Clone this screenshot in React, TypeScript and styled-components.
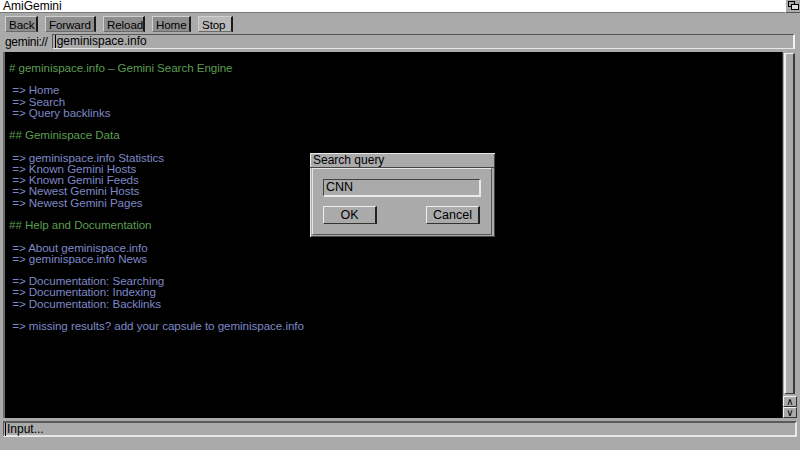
import React from "react";
import styled, { createGlobalStyle } from "styled-components";

const Global = createGlobalStyle`
  html, body { margin: 0; padding: 0; background: #aaaaaa; }
  body { font-family: "Liberation Sans", Arial, sans-serif; width: 800px; height: 450px; overflow: hidden; }
  * { box-sizing: border-box; }
`;

const Screen = styled.div`
  position: relative;
  width: 800px;
  height: 450px;
  background: #aaaaaa;
  display: flex;
  flex-direction: column;
`;

const TitleBar = styled.div`
  height: 13px;
  background: #ffffff;
  border-bottom: 1px solid #7a7a7a;
  display: flex;
  align-items: center;
  justify-content: space-between;
  font-size: 12px;
  color: #000;
  padding-left: 3px;
  line-height: 12px;
`;

const TitleText = styled.span`
  margin-top: -1px;
`;

const Depth = styled.div`
  width: 15px;
  height: 13px;
  background: #aaaaaa;
  border-left: 1px solid #ffffff;
  border-bottom: 1px solid #555;
  display: flex;
  align-items: center;
  justify-content: center;
`;

const Toolbar = styled.div`
  display: flex;
  gap: 7px;
  padding: 2px 5px 0 5px;
  height: 19px;
  align-items: center;
`;

const ToolButton = styled.div<{ $light?: boolean; $w: number }>`
  width: ${(p) => p.$w}px;
  height: 16px;
  padding: 0 0 0 3px;
  font-size: 11.6px;
  line-height: 15px;
  white-space: nowrap;
  letter-spacing: -0.1px;
  color: #000;
  background: ${(p) => (p.$light ? "#b9b9b9" : "#8e8e8e")};
  border-top: 1px solid #cfcfcf;
  border-left: 1px solid #cfcfcf;
  border-right: 2px solid #1a1a1a;
  border-bottom: 1px solid #6a6a6a;
`;

const AddressRow = styled.div`
  display: flex;
  align-items: center;
  height: 17px;
  padding: 0 5px;
  margin-top: 1px;
  gap: 4px;
`;

const Label = styled.span`
  font-size: 12px;
  letter-spacing: -0.3px;
  color: #000;
`;

const Field = styled.div`
  flex: 1;
  height: 15px;
  border-top: 1px solid #555;
  border-left: 1px solid #555;
  border-bottom: 1px solid #e6e6e6;
  border-right: 2px solid #f2f2f2;
  font-size: 12px;
  line-height: 13px;
  color: #000;
  padding-left: 2px;
  display: flex;
  align-items: center;
`;

const Cursor = styled.span`
  display: inline-block;
  width: 1px;
  height: 13px;
  background: #000;
  margin-right: 1px;
`;

const Main = styled.div`
  display: flex;
  margin-top: 2px;
  padding: 0 3px 0 3px;
  height: 366px;
`;

const Content = styled.div`
  flex: 1;
  background: #000;
  border-left: 2px solid #6a6a6a;
  padding: 10px 0 0 4px;
  font-size: 11.6px;
  line-height: 11.22px;
  letter-spacing: -0.05px;
`;

const Line = styled.div<{ $kind: "h" | "l" | "b" }>`
  height: 11.22px;
  white-space: pre;
  color: ${(p) => (p.$kind === "h" ? "#5c9e50" : "#7f88c8")};
`;

const Scroll = styled.div`
  width: 15px;
  display: flex;
  flex-direction: column;
  background: #aaaaaa;
  border-left: 1px solid #333;
`;

const Knob = styled.div`
  flex: 1;
  margin: 1px 2px 2px 1px;
  background: #aaaaaa;
  border-left: 2px solid #f0f0f0;
  border-top: 1px solid #f0f0f0;
  border-right: 2px solid #3a3a3a;
  border-bottom: 1px solid #3a3a3a;
`;

const Arrow = styled.div`
  height: 11px;
  font-size: 10px;
  line-height: 10px;
  text-align: center;
  color: #000;
  border-top: 1px solid #f0f0f0;
  border-left: 1px solid #f0f0f0;
  border-right: 1px solid #333;
  border-bottom: 1px solid #333;
  font-family: "DejaVu Sans", sans-serif;
`;

const Status = styled.div`
  margin: 3px 3px 0 3px;
  height: 16px;
  border-top: 2px solid #5a5a5a;
  border-left: 1px solid #5a5a5a;
  border-bottom: 2px solid #e8e8e8;
  border-right: 2px solid #e8e8e8;
  font-size: 12px;
  display: flex;
  align-items: center;
  padding-left: 1px;
  color: #000;
`;

const Dialog = styled.div`
  position: absolute;
  left: 309px;
  top: 152px;
  width: 187px;
  height: 86px;
  background: #aaaaaa;
  border: 1px solid #000;
  box-shadow: inset 1px 1px 0 #e6e6e6, inset -1px -1px 0 #444;
  display: flex;
  flex-direction: column;
`;

const DialogTitle = styled.div`
  height: 15px;
  font-size: 12px;
  line-height: 15px;
  padding-left: 3px;
  color: #000;
  border-bottom: 1px solid #444;
`;

const DialogBody = styled.div`
  flex: 1;
  margin: 0 3px 2px 2px;
  border-top: 1px solid #e6e6e6;
  border-left: 1px solid #e6e6e6;
  border-right: 1px solid #555;
  border-bottom: 1px solid #555;
  padding: 10px 10px 0 10px;
  display: flex;
  flex-direction: column;
  gap: 9px;
`;

const DialogField = styled.div`
  height: 18px;
  border-top: 1px solid #444;
  border-left: 1px solid #444;
  border-right: 2px solid #eaeaea;
  border-bottom: 2px solid #eaeaea;
  font-size: 12.5px;
  line-height: 15px;
  padding-left: 2px;
  color: #000;
`;

const DialogButtons = styled.div`
  display: flex;
  justify-content: space-between;
  padding-right: 1px;
`;

const DialogButton = styled.div`
  width: 54px;
  height: 18px;
  font-size: 12.5px;
  line-height: 16px;
  text-align: center;
  color: #000;
  border-top: 1px solid #eeeeee;
  border-left: 1px solid #eeeeee;
  border-right: 2px solid #222;
  border-bottom: 1px solid #333;
`;

type L = { k: "h" | "l" | "b"; t: string };

const lines: L[] = [
  { k: "h", t: "# geminispace.info \u2013 Gemini Search Engine" },
  { k: "b", t: "" },
  { k: "l", t: " => Home" },
  { k: "l", t: " => Search" },
  { k: "l", t: " => Query backlinks" },
  { k: "b", t: "" },
  { k: "h", t: "## Geminispace Data" },
  { k: "b", t: "" },
  { k: "l", t: " => geminispace.info Statistics" },
  { k: "l", t: " => Known Gemini Hosts" },
  { k: "l", t: " => Known Gemini Feeds" },
  { k: "l", t: " => Newest Gemini Hosts" },
  { k: "l", t: " => Newest Gemini Pages" },
  { k: "b", t: "" },
  { k: "h", t: "## Help and Documentation" },
  { k: "b", t: "" },
  { k: "l", t: " => About geminispace.info" },
  { k: "l", t: " => geminispace.info News" },
  { k: "b", t: "" },
  { k: "l", t: " => Documentation: Searching" },
  { k: "l", t: " => Documentation: Indexing" },
  { k: "l", t: " => Documentation: Backlinks" },
  { k: "b", t: "" },
  { k: "l", t: " => missing results? add your capsule to geminispace.info" },
];

const buttons = [
  { label: "Back", w: 33 },
  { label: "Forward", w: 51 },
  { label: "Reload", w: 42 },
  { label: "Home", w: 39 },
  { label: "Stop", w: 35, light: true },
];

export default function App() {
  return (
    <>
      <Global />
      <Screen>
        <TitleBar>
          <TitleText>AmiGemini</TitleText>
          <Depth>
            <svg width="11" height="9" viewBox="0 0 11 9">
              <rect x="0.5" y="0.5" width="6" height="5" fill="#aaaaaa" stroke="#000" />
              <rect x="3.5" y="3.5" width="7" height="5" fill="#dddddd" stroke="#000" />
            </svg>
          </Depth>
        </TitleBar>
        <Toolbar>
          {buttons.map((b) => (
            <ToolButton key={b.label} $w={b.w} $light={b.light}>
              {b.label}
            </ToolButton>
          ))}
        </Toolbar>
        <AddressRow>
          <Label>gemini://</Label>
          <Field>
            <Cursor />
            geminispace.info
          </Field>
        </AddressRow>
        <Main>
          <Content>
            {lines.map((l, i) => (
              <Line key={i} $kind={l.k}>
                {l.t}
              </Line>
            ))}
          </Content>
          <Scroll>
            <Knob />
            <Arrow>∧</Arrow>
            <Arrow>∨</Arrow>
          </Scroll>
        </Main>
        <Status>
          <Cursor />
          Input...
        </Status>
        <Dialog>
          <DialogTitle>Search query</DialogTitle>
          <DialogBody>
            <DialogField>CNN</DialogField>
            <DialogButtons>
              <DialogButton>OK</DialogButton>
              <DialogButton>Cancel</DialogButton>
            </DialogButtons>
          </DialogBody>
        </Dialog>
      </Screen>
    </>
  );
}
